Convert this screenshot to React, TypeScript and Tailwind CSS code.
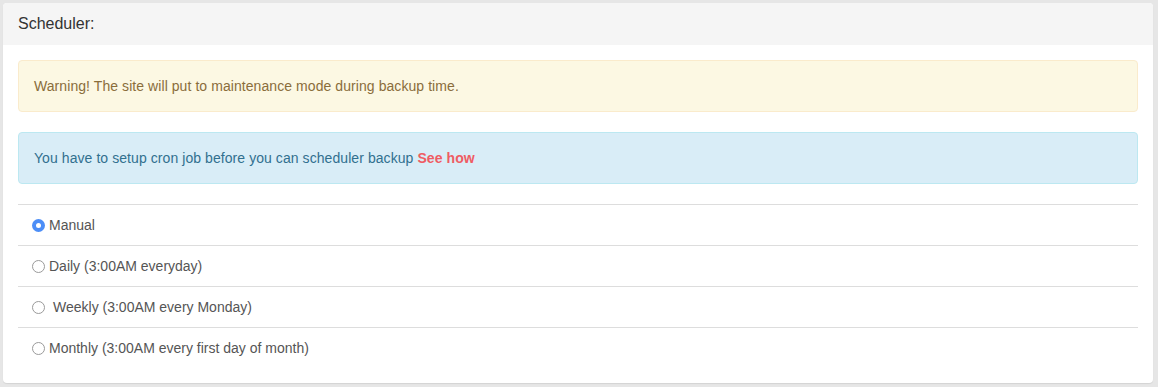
import React from "react";

function Radio({ checked }: { checked?: boolean }) {
  if (checked) {
    return (
      <span className="inline-flex h-[13px] w-[13px] shrink-0 items-center justify-center rounded-full bg-[#4c8ef7]">
        <span className="h-[5px] w-[5px] rounded-full bg-white" />
      </span>
    );
  }
  return (
    <span className="inline-block h-[13px] w-[13px] shrink-0 rounded-full border border-[#9a9a9a] bg-white" />
  );
}

export default function App() {
  const rows = [
    { label: "Manual", checked: true, extra: false },
    { label: "Daily (3:00AM everyday)", checked: false, extra: false },
    { label: "Weekly (3:00AM every Monday)", checked: false, extra: true },
    { label: "Monthly (3:00AM every first day of month)", checked: false, extra: false },
  ];
  return (
    <div
      className="h-[387px] w-[1158px] bg-[#e6e6e6] pl-[3px] pt-[3px]"
      style={{ fontFamily: '"Liberation Sans", Arial, sans-serif' }}
    >
      <div className="h-[380px] w-[1150px] rounded-[4px] bg-white shadow-[0_1px_1px_rgba(0,0,0,0.08)]">
        <div className="flex h-[42px] items-center rounded-t-[4px] bg-[#f5f5f5] px-[15px] text-[16px] text-[#333]">
          Scheduler:
        </div>
        <div className="px-[15px] pt-[15px]">
          <div className="rounded-[4px] border border-[#faebcc] bg-[#fcf8e3] px-[15px] py-[15px] text-[14px] leading-[20px] tracking-[0.07px] text-[#8a6d3b]">
            Warning! The site will put to maintenance mode during backup time.
          </div>
          <div className="mt-[20px] rounded-[4px] border border-[#bce8f1] bg-[#d9edf7] px-[15px] py-[15px] text-[14px] leading-[20px] tracking-[0.07px] text-[#31708f]">
            You have to setup cron job before you can scheduler backup{" "}
            <span className="font-bold text-[#ef5c63]">See how</span>
          </div>
          <div className="mt-[20px]">
            {rows.map((r) => (
              <div
                key={r.label}
                className="flex h-[41px] items-center border-t border-[#dddddd] pl-[14px] text-[14px] text-[#555]"
              >
                <Radio checked={r.checked} />
                <span className={r.extra ? "ml-[8px]" : "ml-[4px]"}>{r.label}</span>
              </div>
            ))}
          </div>
        </div>
      </div>
    </div>
  );
}
